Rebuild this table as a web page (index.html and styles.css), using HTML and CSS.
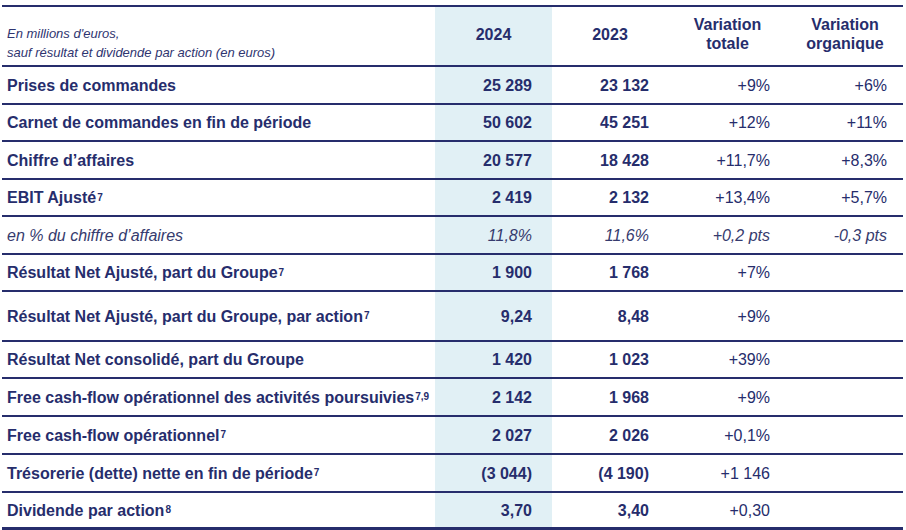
FILE: index.html
```html
<!DOCTYPE html>
<html lang="fr">
<head>
<meta charset="utf-8">
<title>Chiffres clés</title>
<link rel="stylesheet" href="styles.css">
</head>
<body>
<div class="table">
  <div class="row head">
    <div class="cell label note">En millions d'euros,<br>sauf résultat et dividende par action (en euros)</div>
    <div class="cell y24 hc">2024</div>
    <div class="cell y23 hc">2023</div>
    <div class="cell vt hc">Variation<br>totale</div>
    <div class="cell vo hc">Variation<br>organique</div>
  </div>
  <div class="row h38">
    <div class="cell label">Prises de commandes</div>
    <div class="cell y24 num">25 289</div>
    <div class="cell y23 num">23 132</div>
    <div class="cell vt var">+9%</div>
    <div class="cell vo var">+6%</div>
  </div>
  <div class="row h37">
    <div class="cell label">Carnet de commandes en fin de période</div>
    <div class="cell y24 num">50 602</div>
    <div class="cell y23 num">45 251</div>
    <div class="cell vt var">+12%</div>
    <div class="cell vo var">+11%</div>
  </div>
  <div class="row h38">
    <div class="cell label">Chiffre d’affaires</div>
    <div class="cell y24 num">20 577</div>
    <div class="cell y23 num">18 428</div>
    <div class="cell vt var">+11,7%</div>
    <div class="cell vo var">+8,3%</div>
  </div>
  <div class="row h37">
    <div class="cell label">EBIT Ajusté<sup>7</sup></div>
    <div class="cell y24 num">2 419</div>
    <div class="cell y23 num">2 132</div>
    <div class="cell vt var">+13,4%</div>
    <div class="cell vo var">+5,7%</div>
  </div>
  <div class="row h38 it">
    <div class="cell label">en % du chiffre d’affaires</div>
    <div class="cell y24 var">11,8%</div>
    <div class="cell y23 var">11,6%</div>
    <div class="cell vt var">+0,2 pts</div>
    <div class="cell vo var">-0,3 pts</div>
  </div>
  <div class="row h37">
    <div class="cell label">Résultat Net Ajusté, part du Groupe<sup>7</sup></div>
    <div class="cell y24 num">1 900</div>
    <div class="cell y23 num">1 768</div>
    <div class="cell vt var">+7%</div>
    <div class="cell vo var"></div>
  </div>
  <div class="row h50">
    <div class="cell label">Résultat Net Ajusté, part du Groupe, par action<sup>7</sup></div>
    <div class="cell y24 num">9,24</div>
    <div class="cell y23 num">8,48</div>
    <div class="cell vt var">+9%</div>
    <div class="cell vo var"></div>
  </div>
  <div class="row h37">
    <div class="cell label">Résultat Net consolidé, part du Groupe</div>
    <div class="cell y24 num">1 420</div>
    <div class="cell y23 num">1 023</div>
    <div class="cell vt var">+39%</div>
    <div class="cell vo var"></div>
  </div>
  <div class="row h38">
    <div class="cell label">Free cash-flow opérationnel des activités poursuivies<sup>7,9</sup></div>
    <div class="cell y24 num">2 142</div>
    <div class="cell y23 num">1 968</div>
    <div class="cell vt var">+9%</div>
    <div class="cell vo var"></div>
  </div>
  <div class="row h38">
    <div class="cell label">Free cash-flow opérationnel<sup>7</sup></div>
    <div class="cell y24 num">2 027</div>
    <div class="cell y23 num">2 026</div>
    <div class="cell vt var">+0,1%</div>
    <div class="cell vo var"></div>
  </div>
  <div class="row h38">
    <div class="cell label">Trésorerie (dette) nette en fin de période<sup>7</sup></div>
    <div class="cell y24 num">(3 044)</div>
    <div class="cell y23 num">(4 190)</div>
    <div class="cell vt var">+1 146</div>
    <div class="cell vo var"></div>
  </div>
  <div class="row last">
    <div class="cell label">Dividende par action<sup>8</sup></div>
    <div class="cell y24 num">3,70</div>
    <div class="cell y23 num">3,40</div>
    <div class="cell vt var">+0,30</div>
    <div class="cell vo var"></div>
  </div>
</div>
</body>
</html>
```
FILE: styles.css
```css
html, body {
  margin: 0;
  padding: 0;
  background: #ffffff;
}
body {
  padding: 5px 3px 0 2px;
  font-family: "Liberation Sans", Arial, sans-serif;
  color: #262d6c;
}
.table {
  width: 901px;
  border-top: 2px solid #262d6c;
}
.row {
  display: grid;
  grid-template-columns: 433px 117px 116px 119px 116px;
  box-sizing: border-box;
  border-bottom: 2px solid #262d6c;
}
.head { height: 60px; }
.h37 { height: 37px; }
.h38 { height: 38px; }
.h50 { height: 50px; }
.last { height: 37px; border-bottom-width: 3px; }
.cell {
  display: flex;
  align-items: center;
  font-size: 16px;
  line-height: 19px;
  white-space: nowrap;
}
.label {
  padding-left: 5px;
  font-weight: bold;
}
.y24 { background: #e1f0f5; padding-right: 20px; }
.y23 { padding-right: 19px; }
.vt { padding-right: 17px; }
.vo { padding-right: 16px; }
.num, .var { justify-content: flex-end; }
.num { font-weight: bold; }
.var { font-weight: normal; }
.hc {
  justify-content: center;
  text-align: center;
  font-weight: bold;
  padding-right: 0;
  padding-bottom: 4px;
}
.note {
  align-items: flex-end;
  font-weight: normal;
  font-style: italic;
  font-size: 13px;
  line-height: 19px;
  padding-bottom: 3px;
  color: #2f3570;
}
.it .cell {
  font-style: italic;
  font-weight: normal;
  color: #363b6e;
}
sup {
  font-size: 10px;
  line-height: 0;
  vertical-align: 7px;
  margin-left: 1px;
}
```
